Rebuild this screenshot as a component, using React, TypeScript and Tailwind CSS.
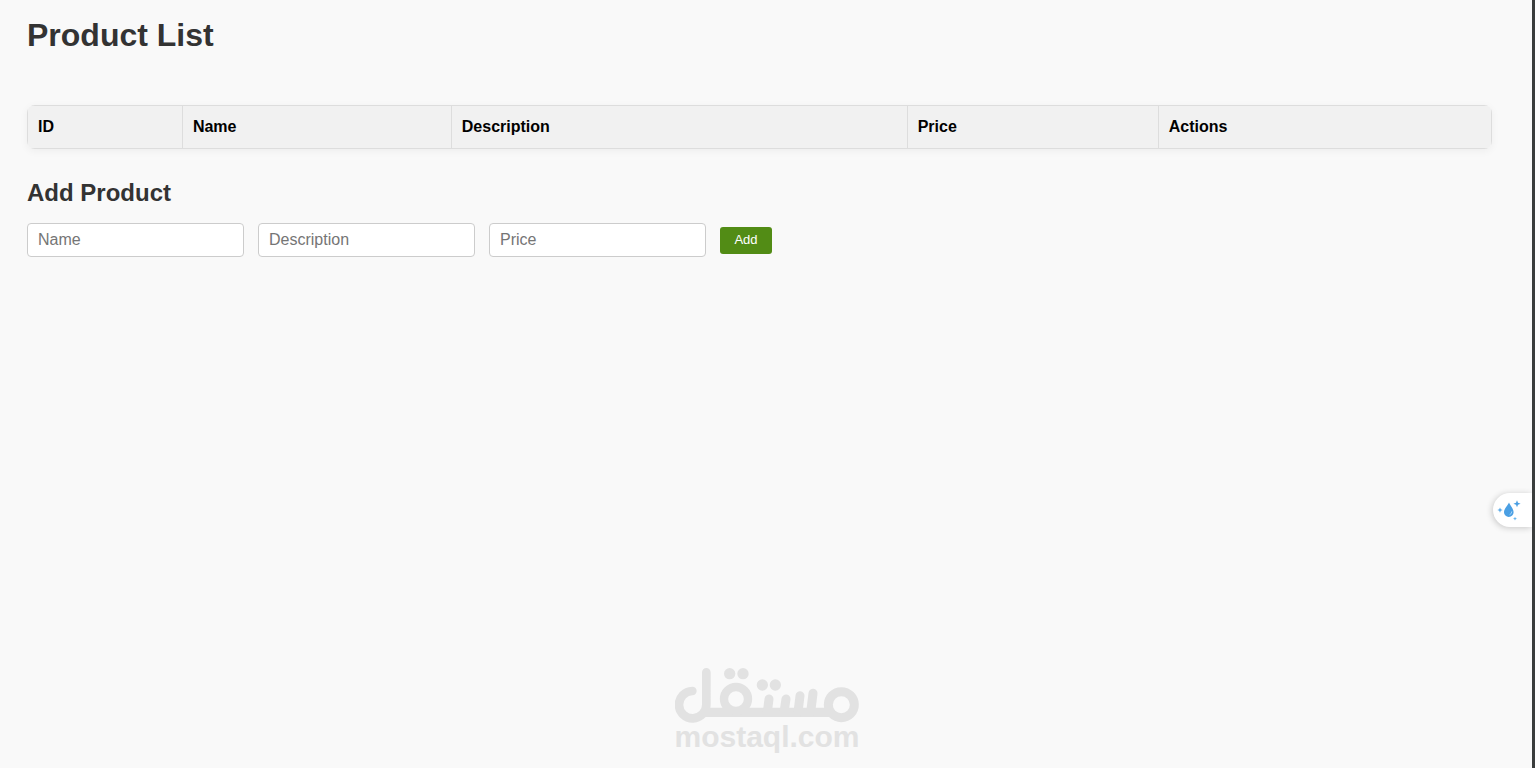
import { FormEvent, useState } from 'react';

interface Product {
  id: number;
  name: string;
  description: string;
  price: string;
}

const columns = [
  { label: 'ID', width: 'w-[10.58%]' },
  { label: 'Name', width: 'w-[18.37%]' },
  { label: 'Description', width: 'w-[31.14%]' },
  { label: 'Price', width: 'w-[17.15%]' },
  { label: 'Actions', width: 'w-[22.76%]' },
];

const emptyForm = { name: '', description: '', price: '' };

const fields = [
  { key: 'name', label: 'Name' },
  { key: 'description', label: 'Description' },
  { key: 'price', label: 'Price' },
] as const;

function MostaqlLogo() {
  return (
    <div className="flex flex-col items-center text-[#e2e2e2]">
      <svg viewBox="45 36 552 168" className="w-[184px] h-14" fill="none" stroke="currentColor" aria-hidden="true">
        {/* Baseline, lam and its hook */}
        <path d="M130 172H510" strokeWidth="28" />
        <path d="M139 52V148A41 41 0 1 1 97 108" strokeWidth="26" strokeLinecap="round" />
        {/* Qaf and meem rings */}
        <circle cx="228" cy="132" r="36" strokeWidth="25" />
        <circle cx="544" cy="149" r="39" strokeWidth="27" />
        {/* Teeth */}
        <path d="M327 132L322 172M378 132L372 172M420 122L414 172M459 115L452 172" strokeWidth="27" strokeLinecap="round" />
        <g fill="currentColor" stroke="none">
          <circle cx="209" cy="56" r="17" />
          <circle cx="249" cy="56" r="17" />
          <circle cx="307" cy="90" r="17" />
          <circle cx="346" cy="90" r="17" />
        </g>
      </svg>
      <p className="text-[30px] leading-7 font-bold">mostaql.com</p>
    </div>
  );
}

function DropIcon() {
  return (
    <svg viewBox="0 0 24 24" className="w-6 h-6" aria-hidden="true">
      <path d="M12 4.500C11.500 6.500 7 10.500 7 14.200a4.800 4.800 0 0 0 9.600 0C16.600 10.500 12.500 6.500 12 4.500z" fill="#4a9fe3" />
      <path d="M14.800 13.800a2.800 2.800 0 0 1-1.800 2.700" fill="none" stroke="#a9d5f7" strokeWidth="1" strokeLinecap="round" />
      <path d="M20 2.200l1 2.500 2.600 1-2.600 1-1 2.600-1-2.600-2.600-1 2.600-1z" fill="#4a9fe3" />
      <path d="M3 9.400l.8 1.800 1.900.8-1.900.8-.8 1.900-.8-1.900L.3 12l1.900-.8z" fill="#58a9e8" />
      <path d="M18 18.800l.6 1.300 1.300.6-1.300.6-.6 1.300-.6-1.300-1.300-.6 1.300-.6z" fill="#64b5f0" />
    </svg>
  );
}

export default function App() {
  const [products, setProducts] = useState<Product[]>([]);
  const [form, setForm] = useState(emptyForm);

  const handleAdd = (e: FormEvent) => {
    e.preventDefault();
    setProducts([...products, { id: Date.now(), ...form }]);
    setForm(emptyForm);
  };

  const handleDelete = (id: number) => {
    setProducts(products.filter((p) => p.id !== id));
  };

  return (
    <div className="min-h-screen flex flex-col bg-[#f9f9f9] border-r-3 border-[#3b3e3d] font-['Liberation_Sans',Arial,sans-serif] text-base text-black">
      <main className="flex-1 pl-[27px] pr-10 pt-[17px]">
        <h1 className="text-[32px] leading-9 font-bold text-[#333333]">Product List</h1>

        <div className="mt-[52px] rounded-lg overflow-hidden shadow-[0_2px_8px_rgba(0,0,0,0.05)]">
          <table className="w-full table-fixed border-collapse text-left">
            <thead>
              <tr className="bg-[#f1f1f1]">
                {columns.map((col) => (
                  <th key={col.label} className={`${col.width} h-[43px] px-[10px] border border-[#dddddd] font-bold`}>
                    {col.label}
                  </th>
                ))}
              </tr>
            </thead>
            <tbody>
              {products.map((p) => (
                <tr key={p.id} className="bg-white">
                  <td className="p-[10px] border border-[#dddddd]">{p.id}</td>
                  <td className="p-[10px] border border-[#dddddd]">{p.name}</td>
                  <td className="p-[10px] border border-[#dddddd]">{p.description}</td>
                  <td className="p-[10px] border border-[#dddddd]">{p.price}</td>
                  <td className="p-[10px] border border-[#dddddd]">
                    <button onClick={() => handleDelete(p.id)} className="text-red-600 cursor-pointer">
                      Delete
                    </button>
                  </td>
                </tr>
              ))}
            </tbody>
          </table>
        </div>

        <h2 className="mt-[30px] text-2xl leading-7 font-bold text-[#333333]">Add Product</h2>
        <form onSubmit={handleAdd} className="mt-4 flex flex-wrap items-center gap-[14px]">
          {fields.map(({ key, label }) => (
            <input
              key={key}
              type="text"
              aria-label={label}
              placeholder={label}
              value={form[key]}
              onChange={(e) => setForm({ ...form, [key]: e.target.value })}
              className="w-[217px] h-[34px] px-[10px] rounded border border-[#cccccc] bg-white placeholder:text-[#757575]"
            />
          ))}
          <button type="submit" className="w-[52px] h-[27px] rounded-[3px] bg-[#528c15] text-white text-[13px] cursor-pointer">
            Add
          </button>
        </form>
      </main>

      <footer className="pl-0.5 pb-[17px]">
        <MostaqlLogo />
      </footer>

      {/* Floating assistant tab on the window edge */}
      <button
        aria-label="Open assistant"
        className="fixed right-[3px] top-[493px] w-[39px] h-[34px] pl-1 flex items-center rounded-l-full bg-white shadow-[-1px_1px_6px_rgba(0,0,0,0.2)] cursor-pointer [clip-path:inset(-12px_0_-12px_-12px)]"
      >
        <DropIcon />
      </button>
    </div>
  );
}
